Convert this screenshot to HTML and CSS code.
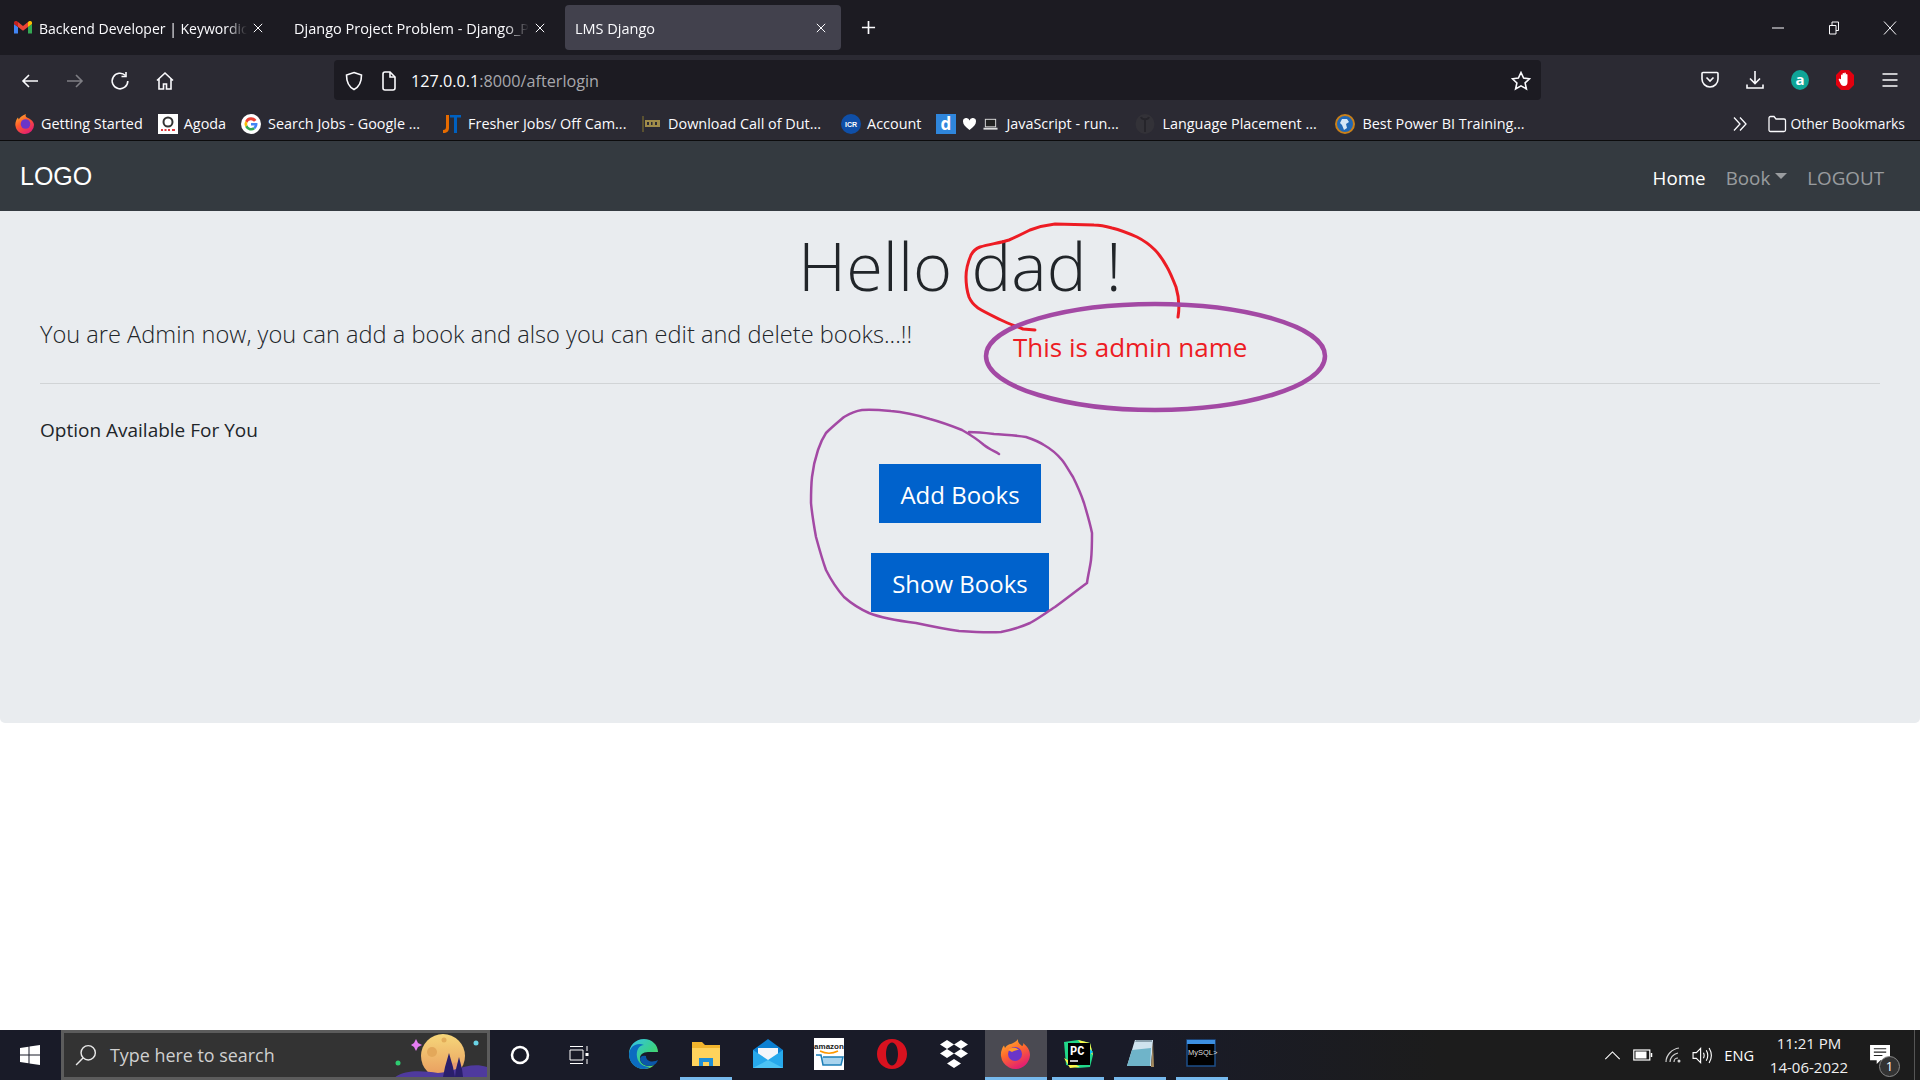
FILE: index.html
```html
<!DOCTYPE html>
<html lang="en">
<head>
<meta charset="utf-8">
<title>LMS Django</title>
<link rel="stylesheet" href="styles.css">
</head>
<body>
<header class="browser">
  <div class="tabbar">
    <div class="tab tab-first">
      <svg class="favicon" viewBox="0 0 18 14"><path d="M0 3v9.500h4V6z" fill="#4285f4"/><path d="M14 6v6.500h4V3z" fill="#34a853"/><path d="M14 1v5l4-3V1.500C18 .2 16 -.5 15 .3z" fill="#fbbc04"/><path d="M4 6V1L9 5l5-4v5L9 9.800z" fill="#ea4335"/><path d="M0 1.500V3l4 3V1L3 .3C2-.5 0 .2 0 1.500z" fill="#c5221f"/></svg>
      <span class="tab-label">Backend Developer | Keywordic</span>
      <svg class="tab-x" viewBox="0 0 12 12"><path d="M1 1l10 10M11 1L1 11"/></svg>
    </div>
    <div class="tab tab-second">
      <span class="tab-label">Django Project Problem - Django_P</span>
      <svg class="tab-x" viewBox="0 0 12 12"><path d="M1 1l10 10M11 1L1 11"/></svg>
    </div>
    <div class="tab tab-active">
      <span class="tab-label">LMS Django</span>
      <svg class="tab-x" viewBox="0 0 12 12"><path d="M1 1l10 10M11 1L1 11"/></svg>
    </div>
    <svg class="tab-new" viewBox="0 0 16 16"><path d="M8 1v14M1 8h14"/></svg>
    <div class="window-controls">
      <svg viewBox="0 0 14 14"><path d="M1 7h12"/></svg>
      <svg viewBox="0 0 14 14"><path d="M2.500 4.500h6.500v8.500H2.500zM5 4.500V1h6.500v8.500H9"/></svg>
      <svg viewBox="0 0 14 14"><path d="M1 .5l12 13M13 .5L1 13.500"/></svg>
    </div>
  </div>

  <div class="toolbar">
    <div class="nav-buttons">
      <svg class="tool" viewBox="0 0 20 20"><path d="M18 10H3M9 4l-6 6 6 6"/></svg>
      <svg class="tool tool-off" viewBox="0 0 20 20"><path d="M2 10h15M11 4l6 6-6 6"/></svg>
      <svg class="tool" viewBox="0 0 20 20"><path d="M15.500 4.500A7.800 7.800 0 1 0 17.800 10"/><path d="M16 1v4.500h-4.500" /></svg>
      <svg class="tool" viewBox="0 0 20 20"><path d="M2 9.500L10 2l8 7.500M4 8v10h4.500v-5h3v5H16V8"/></svg>
    </div>
    <div class="urlbar">
      <svg class="tool" viewBox="0 0 20 20"><path d="M10 1.500l7.500 2.500c0 7-1.500 11.500-7.500 14.500C4 15.500 2.500 11 2.500 4z"/></svg>
      <svg class="tool tool-file" viewBox="0 0 20 20"><path d="M4 3a2 2 0 0 1 2-2h5l5 5v11a2 2 0 0 1-2 2H6a2 2 0 0 1-2-2z"/><path d="M11 1v5h5"/></svg>
      <span class="url"><span class="url-host">127.0.0.1</span>:8000/afterlogin</span>
      <svg class="tool tool-star" viewBox="0 0 20 20"><path d="M10 1.500l2.600 5.600 6 .7-4.500 4.100 1.300 6L10 14.900 4.600 18l1.300-6L1.400 7.800l6-.7z"/></svg>
    </div>
    <div class="toolbar-right">
      <svg class="tool" viewBox="0 0 20 20"><path d="M3 2.500h14a1 1 0 0 1 1 1V9a8 8 0 0 1-16 0V3.500a1 1 0 0 1 1-1zM6.500 7.500L10 11l3.500-3.500"/></svg>
      <svg class="tool" viewBox="0 0 20 20"><path d="M10 1v12M5 8.500l5 5 5-5M2 14.500V18h16v-3.500"/></svg>
      <svg class="ext" viewBox="0 0 20 20"><ellipse cx="10" cy="10" rx="9" ry="10" fill="#0fa597"/><text x="10" y="15" class="ext-a">a</text></svg>
      <svg class="ext" viewBox="0 0 20 20"><path d="M6 0h8l5 5v10l-5 5H6l-5-5V5z" fill="#e2000f"/><path d="M6 9V5.500c0-1.200 1.500-1.200 1.500 0V4c0-1.300 1.700-1.300 1.700 0v-.5c0-1.200 1.700-1.200 1.700 0V5c0-1.200 1.600-1.200 1.600 0v7c0 2.500-1 4-3.500 4-2 0-2.800-1-3.500-2.500L3.800 10c-.5-1.200 1-1.800 1.500-.8z" fill="#fff"/></svg>
      <svg class="tool" viewBox="0 0 20 20"><path d="M2.500 4h15M2.500 10h15M2.500 16h15"/></svg>
    </div>
  </div>

  <div class="bookmarks">
    <div class="bm bm-1">
      <svg class="bm-icon" viewBox="0 0 20 20"><defs><linearGradient id="ff" x1="0" y1="0" x2=".6" y2="1"><stop offset="0" stop-color="#ffbd30"/><stop offset=".5" stop-color="#ff5a2c"/><stop offset="1" stop-color="#e3206f"/></linearGradient></defs><path d="M10 20A9.500 9.500 0 0 1 1 7c.5-2 1.500-3 2-3.500l.7 2C5 3 8 1 11 0c-1 2 0 3 2 4 3 1.500 6 3.500 6 7a9 9 0 0 1-9 9z" fill="url(#ff)"/><circle cx="10.500" cy="10" r="4.800" fill="#6b35c9"/></svg>
      <span>Getting Started</span>
    </div>
    <div class="bm">
      <svg class="bm-icon" viewBox="0 0 20 20"><rect width="20" height="20" fill="#fff"/><circle cx="10" cy="8" r="4.500" fill="none" stroke="#333" stroke-width="2"/><path d="M3 16h2M6.500 16h2M10 16h2M14 16h3" stroke="#e0393e" stroke-width="2"/></svg>
      <span>Agoda</span>
    </div>
    <div class="bm bm-long">
      <svg class="bm-icon" viewBox="0 0 20 20"><circle cx="10" cy="10" r="10" fill="#fff"/><path d="M15.500 6A6.500 6.500 0 0 0 4.200 7l2.200 1.700A3.800 3.800 0 0 1 13 7.800z" fill="#ea4335"/><path d="M4.200 7a6.500 6.500 0 0 0 0 6l2.200-1.700a3.800 3.800 0 0 1 0-2.600z" fill="#fbbc05"/><path d="M4.200 13a6.500 6.500 0 0 0 10 2l-2.100-1.700a3.800 3.800 0 0 1-5.700-2z" fill="#34a853"/><path d="M16.400 9H10v2.500h3.700a3 3 0 0 1-1.600 1.800l2.100 1.700c1.500-1.300 2.600-3.500 2.200-6z" fill="#4285f4"/></svg>
      <span>Search Jobs - Google ...</span>
    </div>
    <div class="bm bm-long">
      <svg class="bm-icon" viewBox="0 0 20 20"><path d="M8 1v13c0 3-2 5-6 5v-3c2 0 3-1 3-3V1z" fill="#e66b00"/><path d="M9 1h11v2.500h-4V19h-3V3.500H9z" fill="#0060c0"/></svg>
      <span>Fresher Jobs/ Off Cam...</span>
    </div>
    <div class="bm bm-long">
      <svg class="bm-icon" viewBox="0 0 20 20"><path d="M1 2h2v16H1z" fill="#5a5130"/><path d="M4 6h15v7H4z" fill="#a08c4a"/><path d="M6 8h2v3H6zM10 8h1.500v3H10zM14 8h2v3h-2z" fill="#2b2a33"/></svg>
      <span>Download Call of Dut...</span>
    </div>
    <div class="bm">
      <svg class="bm-icon" viewBox="0 0 20 20"><circle cx="10" cy="10" r="10" fill="#0f4fa8"/><text x="10" y="13" class="icr">ICR</text></svg>
      <span>Account</span>
    </div>
    <div class="bm bm-tight">
      <svg class="bm-icon" viewBox="0 0 20 20"><rect width="20" height="20" fill="#2f86dc"/><text x="10" y="16" class="d-letter">d</text></svg>
    </div>
    <div class="bm bm-tight">
      <svg class="bm-icon-s" viewBox="0 0 14 14"><path d="M7 13C3 10 .5 7.500.5 4.500a3.300 3.300 0 0 1 6.500-1 3.300 3.300 0 0 1 6.500 1C13.500 7.500 11 10 7 13z" fill="#fff"/></svg>
    </div>
    <div class="bm bm-js">
      <svg class="bm-icon-s" viewBox="0 0 16 14"><rect x="2.500" y="2" width="11" height="8" fill="#222" stroke="#ddd"/><path d="M.5 12h15" stroke="#ddd" stroke-width="2"/></svg>
      <span>JavaScript - run...</span>
    </div>
    <div class="bm bm-long">
      <svg class="bm-icon" viewBox="0 0 20 20"><ellipse cx="10" cy="10" rx="9.500" ry="10" fill="#333238"/><path d="M6 3c1 3 7 3 8 0M10 6v12" stroke="#26252b" stroke-width="2" fill="none"/></svg>
      <span>Language Placement ...</span>
    </div>
    <div class="bm bm-long">
      <svg class="bm-icon" viewBox="0 0 20 20"><circle cx="10" cy="10" r="9" fill="#2168b5" stroke="#c9801a" stroke-width="2"/><path d="M7 5h5l2 3-3 2 1 4-3 2-2-5-2-2z" fill="#d6e6f5"/></svg>
      <span>Best Power BI Training...</span>
    </div>
    <div class="bm-spacer"></div>
    <svg class="bm-more" viewBox="0 0 16 16"><path d="M2 1.500L8 8l-6 6.500M8 1.500L14 8l-6 6.500"/></svg>
    <div class="bm bm-other">
      <svg class="bm-folder" viewBox="0 0 20 20"><path d="M2 4a1.500 1.500 0 0 1 1.500-1.500H7L9 5h8a1.500 1.500 0 0 1 1.500 1.500V16a1.500 1.500 0 0 1-1.500 1.500H3.500A1.500 1.500 0 0 1 2 16z"/></svg>
      <span>Other Bookmarks</span>
    </div>
  </div>
</header>

<nav class="navbar">
  <a class="brand">LOGO</a>
  <div class="nav-links">
    <a class="nav-link nav-active">Home</a>
    <a class="nav-link nav-book">Book<span class="caret"></span></a>
    <a class="nav-link">LOGOUT</a>
  </div>
</nav>

<main class="page">
  <section class="jumbotron">
    <h1 class="hello">Hello dad !</h1>
    <p class="lead">You are Admin now, you can add a book and also you can edit and delete books...!!</p>
    <hr class="rule">
    <p class="option">Option Available For You</p>
    <div class="actions">
      <a class="btn">Add Books</a>
      <a class="btn">Show Books</a>
    </div>
  </section>
</main>

<footer class="taskbar">
  <div class="start">
    <svg class="win" viewBox="0 0 20 20"><path d="M0 3l8.500-1.300V9.500H0zM9.500 1.500L20 0v9.500H9.500zM0 10.500h8.500v7.800L0 17zM9.500 10.500H20V20L9.500 18.500z"/></svg>
  </div>
  <div class="search">
    <svg class="search-icon" viewBox="0 0 20 20"><circle cx="12" cy="8" r="6.500"/><path d="M7.500 12.500L1 19"/></svg>
    <span class="search-text">Type here to search</span>
    <svg class="moon" viewBox="0 0 100 44"><defs><linearGradient id="mg" x1="0" y1="0" x2="0" y2="1"><stop offset="0" stop-color="#f6d77a"/><stop offset="1" stop-color="#e89a5e"/></linearGradient></defs><circle cx="11" cy="30" r="2.500" fill="#2ecc71"/><path d="M29 6l2 4 4 2-4 2-2 4-2-4-3-2 3-2z" fill="#e57cf2"/><circle cx="89" cy="10" r="2.500" fill="#6ad4e6"/><circle cx="56" cy="23" r="22" fill="url(#mg)"/><circle cx="57" cy="7" r="2.500" fill="#e3ad5a"/><circle cx="45" cy="19" r="5" fill="#e3a85a"/><circle cx="68" cy="33" r="3.500" fill="#e69a70"/><path d="M6 46c10-10 30-8 45-6 15 0 30-12 49-6v12z" fill="#4f3a9e"/><path d="M62 20l4 14 2 10H56l2-10zM72 24l3 12 1 8h-8l1-8z" fill="#2a1f6b"/></svg>
  </div>
  <div class="task-sys">
    <svg class="cortana" viewBox="0 0 20 20"><circle cx="10" cy="10" r="8"/></svg>
    <svg class="taskview" viewBox="0 0 20 22"><path d="M1 6h13v10H1zM1 2.500h13M1 19.500h13M18 2v5M18 15v5"/><rect x="16.500" y="9" width="3" height="3" fill="#fff" stroke="none"/></svg>
  </div>
  <div class="apps">
    <div class="app">
      <svg viewBox="0 0 32 32"><defs><linearGradient id="eg" x1="0" y1="0" x2="1" y2="1"><stop offset="0" stop-color="#35c1f1"/><stop offset=".6" stop-color="#3bd27f"/><stop offset="1" stop-color="#7be35a"/></linearGradient></defs><path d="M16 1C7 1 1 8 1 16c0 8 6 15 15 15 4 0 8-1.500 10-4-5 2-13 1-14-6-.5-4 3-7 8-7h10C30 7 24 1 16 1z" fill="url(#eg)"/><path d="M1 16c1-9 9-12 15-9-5 0-8 5-7 12 1 6 6 10 13 10-2 1-4 2-6 2C8 31 1 25 1 16z" fill="#0c6cc0"/><path d="M12 21c1 7 9 8 14 6 2-1 3-3 4-5-3 2-12 3-12-4-4-1-6 1-6 3z" fill="#0b57a8"/></svg>
    </div>
    <div class="app app-open">
      <svg viewBox="0 0 32 32"><path d="M2 4h10l3 3h15v21H2z" fill="#f2b52d"/><path d="M2 10h28v18H2z" fill="#ffd35c"/><path d="M9 20h14v8h-4v-4h-6v4H9z" fill="#1f8fd6"/></svg>
    </div>
    <div class="app">
      <svg viewBox="0 0 32 32"><path d="M16 1L1 12v18h30V12z" fill="#0a7fd1"/><path d="M6 10h20v7l-10 6-10-6z" fill="#f3f6fa"/><path d="M1 12l15 10 15-10v18H1z" fill="#27a9ec"/><path d="M1 30l15-8 15 8z" fill="#4cc4f5"/></svg>
    </div>
    <div class="app">
      <svg viewBox="0 0 32 32"><rect y="0" width="30" height="32" fill="#fff"/><text x="15" y="11" class="amazon">amazon</text><path d="M6 13c6 3 12 3 18 0" stroke="#f90" stroke-width="1.500" fill="none"/><path d="M2 17h5l2 10h18l2-8H9" fill="#a9d4ee" stroke="#1d7fb8" stroke-width="1.500"/></svg>
    </div>
    <div class="app">
      <svg viewBox="0 0 32 32"><path d="M16 1C7 1 1 8 1 16s6 15 15 15 15-7 15-15S25 1 16 1zm0 3.500c3.500 0 6 5 6 11.500s-2.500 11.500-6 11.500-6-5-6-11.500S12.500 4.500 16 4.500z" fill="#d8121f" fill-rule="evenodd"/></svg>
    </div>
    <div class="app">
      <svg viewBox="0 0 32 32"><path d="M9 2l7 4.500-7 4.500-7-4.500zM23 2l7 4.500L23 11l-7-4.500zM9 11l7 4.500L9 20l-7-4.500zM23 11l7 4.500-7 4.500-7-4.500zM16 21l7 4.500-7 4.500-7-4.500z" fill="#fff"/></svg>
    </div>
    <div class="app app-active app-open">
      <svg viewBox="0 0 32 32"><defs><linearGradient id="ff2" x1="0" y1="0" x2=".5" y2="1"><stop offset="0" stop-color="#ffbd30"/><stop offset=".5" stop-color="#ff6a2c"/><stop offset="1" stop-color="#e3206f"/></linearGradient></defs><path d="M16 31A14.500 14.500 0 0 1 2 11c.5-2 1.500-3 2-3.500L5 10c2-3 4-4 6-4 2-1 5-2 7-5-.5 3 1 5 4 7 2-1 1-3 1-3 4 3 7 7 7 12a15 15 0 0 1-14 14z" fill="url(#ff2)"/><circle cx="15" cy="16" r="7" fill="#6b35c9"/><path d="M8 12c3-3 8-3 11 0-3 0-5 1-7 2z" fill="#ff9a2c"/></svg>
    </div>
    <div class="app app-open">
      <svg viewBox="0 0 32 32"><path d="M2 4l14-2 12 3 3 12-3 12-12 1-12-3z" fill="#21d789"/><path d="M16 2l12 3 3 12-8-6z" fill="#fcf84a"/><path d="M25 8l6 6-6 5z" fill="#07c3f2"/><path d="M2 20l6 10 10-1z" fill="#fcf84a"/><rect x="6" y="5" width="22" height="22" fill="#000"/><text x="8" y="17" class="pc">PC</text><path d="M8 23h8" stroke="#fff" stroke-width="1.500"/></svg>
    </div>
    <div class="app app-open">
      <svg viewBox="0 0 32 32"><path d="M11 2h18l-2 26H3z" fill="#cfe3ee"/><path d="M12 2h16v2H11z" fill="#8aa0ad"/><path d="M8 12l19-2-1 18H3z" fill="#6fb4c9"/><path d="M29 4l1 25h-3z" fill="#a58a5e"/></svg>
    </div>
    <div class="app app-open">
      <svg viewBox="0 0 32 32"><rect x="1" y="2" width="28" height="26" fill="#000" stroke="#1c4f8a" stroke-width="1.500"/><rect x="1" y="2" width="28" height="4" fill="#3c8fe0"/><text x="2" y="17" class="mysql">MySQL&gt;</text></svg>
    </div>
  </div>
  <div class="tray">
    <svg class="tray-chev" viewBox="0 0 18 10"><path d="M1 9l8-8 8 8"/></svg>
    <svg class="tray-bat" viewBox="0 0 20 12"><rect x=".8" y="1" width="16" height="10"/><rect x="2.500" y="2.500" width="11" height="7" fill="#fff" stroke="none"/><path d="M18.500 4v4" stroke-width="1.500"/></svg>
    <svg class="tray-wifi" viewBox="0 0 18 16"><path d="M1 15C1 8 7 2 14 1M5 15c0-4 3-8 8-9M9 15c0-2 1.500-4 4-4"/><circle cx="14" cy="14" r="1.500" fill="#fff" stroke="none"/></svg>
    <svg class="tray-vol" viewBox="0 0 22 18"><path d="M1 6h3.500L9 1.500v15L4.500 12H1zM12 6c1 2 1 4 0 6M15 3.500c2 3.500 2 7.500 0 11M18 1c3 5 3 11 0 16"/></svg>
    <span class="tray-lang">ENG</span>
    <div class="clock"><span>11:21 PM</span><span>14-06-2022</span></div>
    <div class="notify">
      <svg class="notify-bubble" viewBox="0 0 22 20"><path d="M0 0h21v16H11l-4 4v-4H0z" fill="#fff"/><path d="M4 4h13M4 7.500h13M4 11h9" stroke="#222" stroke-width="1.200"/></svg>
      <span class="notify-count">1</span>
    </div>
  </div>
</footer>

<svg class="ink" viewBox="0 0 1920 1080" aria-hidden="true">
  <path class="ink-red" d="M1178 317C1180 305 1179 297 1176 287C1172 277 1170 272 1167 267C1162 258 1160 255 1155 250C1148 243 1145 241 1137 237C1128 233 1120 230 1112 228C1105 226 1100 225 1094 225L1055 224C1046 225 1038 227 1030 230C1022 234 1016 237 1009 240C1000 243 990 244 980 247C975 249 973 251 971 255C968 262 966 270 966 277C966 285 967 291 969 297C971 302 974 305 978 308C986 313 993 316 1001 320C1009 324 1016 326 1023 329L1035 330"/>
  <path class="ink-purple-thick" d="M986 356C986 325 1070 304 1155 304C1240 304 1325 325 1325 356C1325 388 1240 410 1155 410C1070 410 986 388 986 356Z"/>
  <path class="ink-purple-thin" d="M999 454C994 451 989 449 984 445C977 439 969 434 962 430C952 426 941 422 930 419C917 415 904 412 891 411C881 410 871 409 862 410C855 411 849 414 844 417C837 423 831 428 826 433C822 439 820 444 818 450C815 459 813 468 812 477C811 486 811 495 811 503C812 514 814 526 816 537C819 548 822 559 826 570C831 580 837 589 844 597C852 604 860 609 869 613C884 619 900 621 916 623C930 626 944 629 959 631C973 632 987 633 1001 632C1011 630 1021 627 1030 623C1039 618 1047 612 1055 607C1066 599 1076 591 1087 583C1088 575 1090 568 1091 560C1092 551 1092 542 1092 533C1090 523 1087 513 1084 503C1081 494 1077 485 1073 477C1069 471 1066 465 1062 460C1057 454 1051 449 1044 445C1038 441 1032 439 1026 437C1015 435 1005 435 994 434C986 433 977 432 969 432"/>
</svg>
<div class="ink-note">This is admin name</div>
</body>
</html>
```

FILE: styles.css
```css
* { box-sizing: border-box; }
html, body { margin: 0; padding: 0; }
body {
  position: relative;
  width: 1920px;
  height: 1080px;
  overflow: hidden;
  display: flex;
  flex-direction: column;
  background: #fff;
  font-family: "Open Sans", "Noto Sans", sans-serif;
  color: #212529;
}

/* browser chrome */
.browser { height: 141px; flex: none; color: #fbfbfe; font-size: 14.400px; background: #2b2a33; border-bottom: 1px solid #0c0c0d; }
.tabbar { height: 55px; background: #1c1b22; display: flex; align-items: flex-start; padding: 5px 0 0 14px; }
.tab { height: 45px; display: flex; align-items: center; white-space: nowrap; font-size: 14.500px; padding-top: 1px; }
.tab-first { width: 252px; font-size: 14px; }
.tab-second { width: 270px; margin-left: 28px; }
.tab-active { width: 276px; margin-left: 1px; background: #42414d; border-radius: 4px; padding-left: 10px; }
.favicon { width: 18px; height: 14px; flex: none; margin-right: 7px; }
.tab-label { flex: 1; overflow: hidden; min-width: 0; -webkit-mask-image: linear-gradient(to right, #000 90%, transparent); mask-image: linear-gradient(to right, #000 90%, transparent); }
.tab-x { width: 10px; height: 10px; flex: none; margin-left: 6px; fill: none; stroke: #fbfbfe; stroke-width: 1.200; }
.tab-first .tab-x { margin-right: 3px; }
.tab-second .tab-x { margin-right: 19px; }
.tab-active .tab-x { margin-right: 15px; }
.tab-new { width: 15px; height: 15px; margin: 15px 0 0 20px; fill: none; stroke: #fbfbfe; stroke-width: 1.800; }
.window-controls { margin-left: auto; display: flex; gap: 42px; padding: 16px 23px 0 0; }
.window-controls svg { width: 14px; height: 14px; fill: none; stroke: #fbfbfe; stroke-width: 1; }

.toolbar { height: 50px; display: flex; align-items: center; }
.tool { width: 20px; height: 20px; flex: none; fill: none; stroke: #fbfbfe; stroke-width: 1.600; }
.tool-off { opacity: .4; }
.nav-buttons { display: flex; gap: 25px; padding: 2px 0 0 20px; width: 334px; }
.urlbar { width: 1207px; height: 40px; background: #1c1b22; border-radius: 4px; display: flex; align-items: center; padding: 1px 10px 0 10px; }
.tool-file { margin-left: 15px; }
.url { margin-left: 12px; font-size: 16.200px; color: #a8a8ad; flex: 1; }
.url-host { color: #fbfbfe; }
.toolbar-right { display: flex; align-items: center; gap: 25px; padding-left: 159px; }
.ext { width: 20px; height: 22px; flex: none; }
.ext-a { font-size: 15px; font-weight: 700; fill: #fff; text-anchor: middle; }

.bookmarks { height: 35px; display: flex; align-items: center; padding: 2px 0 0 15px; white-space: nowrap; }
.bm { display: flex; align-items: center; gap: 6px; margin-right: 15px; }
.bm-1 { margin-right: 15px; }
.bm-long { gap: 7px; }
.bm-long span { width: 158px; }
.bm-icon { width: 20px; height: 20px; flex: none; }
.bm-icon-s { width: 15px; height: 14px; flex: none; }
.bm-tight { margin-right: 6px; }
.bm-js { gap: 8px; margin-right: 16px; }
.bm-js span { width: 113px; }
.bm-spacer { flex: 1; }
.bm-more { width: 16px; height: 16px; fill: none; stroke: #fbfbfe; stroke-width: 1.300; margin-right: 19px; }
.bm-folder { width: 20px; height: 20px; fill: none; stroke: #fbfbfe; stroke-width: 1.300; flex: none; }
.bm-other { gap: 3px; margin-right: 15px; font-size: 13.900px; }
.icr { font: 700 7px "Liberation Sans", sans-serif; fill: #fff; text-anchor: middle; }
.d-letter { font: 700 17px "Open Sans", sans-serif; fill: #fff; text-anchor: middle; }

/* navbar */
.navbar { height: 70px; flex: none; background: #343a40; display: flex; align-items: center; justify-content: space-between; padding: 3px 36px 0 20px; }
.brand { font: 400 25px "Liberation Sans", Arial, sans-serif; color: #fff; margin-top: -3px; }
.nav-links { display: flex; gap: 20px; align-items: center; font-size: 18.800px; }
.nav-link { color: rgba(255, 255, 255, .5); }
.nav-active { color: #fff; }
.nav-book { display: flex; align-items: center; }
.caret { width: 0; height: 0; border-left: 6px solid transparent; border-right: 6px solid transparent; border-top: 6px solid rgba(255, 255, 255, .5); margin: -3px 0 0 5px; }

/* page */
.page { flex: 1; min-height: 0; }
.jumbotron { height: 512px; background: #e9ecef; border-radius: 0 0 5px 5px; padding: 13px 40px 0; }
.hello { margin: 0; height: 84px; line-height: 84px; text-align: center; font-size: 66.800px; font-weight: 300; word-spacing: 2px; }
.lead { margin: 9px 0 0; height: 34px; line-height: 34px; font-size: 23.600px; font-weight: 300; }
.rule { margin: 32px 0 0; border: 0; border-top: 1px solid rgba(0, 0, 0, .1); }
.option { margin: 32px 0 0; height: 28px; line-height: 28px; font-size: 19px; }
.actions { display: flex; flex-direction: column; align-items: center; gap: 30px; margin-top: 20px; }
.btn { background: #0062cc; color: #fff; font-size: 24px; height: 59px; line-height: 61px; padding: 0 21px; }

/* taskbar */
.taskbar { height: 50px; flex: none; display: flex; background: linear-gradient(to right, #191b28, #191b28 60%, #1c1c1c 75%); }
.start { width: 61px; display: flex; align-items: center; justify-content: center; padding-right: 2px; }
.win { width: 20px; height: 20px; fill: #fff; }
.search { width: 429px; background: #333; border: 3px solid #5c5c5c; display: flex; align-items: center; padding-left: 11px; overflow: hidden; }
.search-icon { width: 22px; height: 22px; flex: none; fill: none; stroke: #e8e8e8; stroke-width: 1.300; }
.search-text { margin-left: 13px; color: #d0d0d0; font-size: 17.900px; }
.moon { width: 100px; height: 44px; margin-left: auto; flex: none; }
.task-sys { display: flex; align-items: center; gap: 39px; padding-left: 20px; width: 122px; flex: none; }
.cortana { width: 20px; height: 20px; fill: none; stroke: #fff; stroke-width: 2.500; flex: none; }
.taskview { width: 20px; height: 22px; fill: none; stroke: #fff; stroke-width: 1; flex: none; }
.apps { display: flex; margin-left: 1px; }
.app { width: 62px; height: 50px; display: flex; align-items: center; justify-content: center; padding-bottom: 3px; position: relative; }
.app svg { width: 32px; height: 32px; }
.app-open::after { content: ""; position: absolute; left: 5px; right: 5px; bottom: 0; height: 3px; background: #76b9ed; }
.app-active { background: #4a4a52; }
.app-active::after { left: 0; right: 0; }
.amazon { font: 700 8px "Liberation Sans", sans-serif; fill: #222; text-anchor: middle; }
.pc { font: 700 12px "Liberation Mono", monospace; fill: #fff; }
.mysql { font: 400 7.500px "Liberation Sans", sans-serif; fill: #ddd; }

.tray { margin-left: auto; margin-right: 5px; display: flex; align-items: center; padding-right: 10px; color: #fff; border-right: 1px solid #555; }
.tray svg { fill: none; stroke: #fff; stroke-width: 1.200; flex: none; }
.tray-chev { width: 17px; height: 9px; margin-right: 12px; }
.tray-bat { width: 20px; height: 12px; margin-right: 12px; }
.tray-wifi { width: 18px; height: 16px; margin-right: 9px; opacity: .8; }
.tray-vol { width: 21px; height: 17px; margin-right: 11px; }
.tray-lang { font-size: 14.600px; margin-right: 5px; }
.clock { width: 100px; display: flex; flex-direction: column; align-items: center; font-size: 15px; line-height: 24px; color: #f0f0f0; }
.notify { width: 42px; position: relative; height: 34px; margin-left: 3px; }
.tray svg.notify-bubble { position: absolute; left: 8px; top: 7px; width: 21px; height: 19px; stroke: none; }
.notify-count { position: absolute; left: 17px; top: 18px; width: 21px; height: 21px; border-radius: 50%; background: #333; border: 1px solid #8a8a8a; font-size: 13px; line-height: 19px; text-align: center; }

/* hand-drawn annotations lying over the screenshot */
.ink { position: absolute; left: 0; top: 0; width: 1920px; height: 1080px; pointer-events: none; }
.ink path { fill: none; stroke-linecap: round; stroke-linejoin: round; }
.ink-red { stroke: #ed1c24; stroke-width: 3; }
.ink-purple-thick { stroke: #a349a4; stroke-width: 4.500; }
.ink-purple-thin { stroke: #a349a4; stroke-width: 2.500; }
.ink-note { position: absolute; left: 1013px; top: 329px; font-size: 26px; line-height: 36px; color: #ed1c24; }
```
